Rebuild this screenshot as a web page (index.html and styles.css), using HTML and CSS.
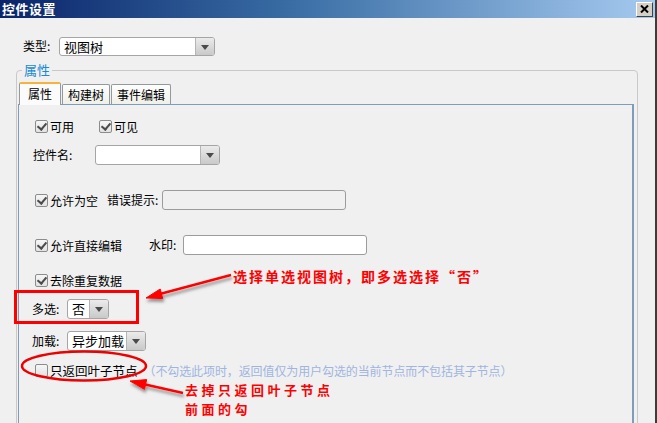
FILE: index.html
```html
<!DOCTYPE html>
<html lang="zh-CN">
<head>
	<meta charset="UTF-8">
	<meta name="viewport" content="width=device-width, initial-scale=1.0">
	<title>控件设置</title>
	<link rel="stylesheet" href="styles.css">
</head>
<body>
	<div class="window">
		<header class="titlebar">
			<span class="title">控件设置</span>
			<span class="close">
				<svg width="9" height="8" viewBox="0 0 9 8"><path d="M1 0.5 L8 7.5 M8 0.5 L1 7.5" stroke="#000" stroke-width="2"/></svg>
			</span>
		</header>

		<main class="content">
			<div class="type-row">
				<span class="label">类型:</span>
				<div class="select select-type"><span class="val">视图树</span><span class="arrow"></span></div>
			</div>

			<fieldset class="props">
				<legend>属性</legend>
				<div class="tabs">
					<span class="tab active">属性</span>
					<span class="tab">构建树</span>
					<span class="tab">事件编辑</span>
				</div>
				<div class="panel">
					<div class="row row-checks">
						<label class="check"><span class="box on"></span>可用</label>
						<label class="check check-visible"><span class="box on"></span>可见</label>
					</div>
					<div class="row row-name">
						<span class="label label-name">控件名:</span>
						<div class="select select-name"><span class="val"></span><span class="arrow"></span></div>
					</div>
					<div class="row row-empty">
						<label class="check"><span class="box on"></span>允许为空</label>
						<span class="label label-error">错误提示:</span>
						<span class="input disabled"></span>
					</div>
					<div class="row row-edit">
						<label class="check"><span class="box on"></span>允许直接编辑</label>
						<span class="label label-mark">水印:</span>
						<span class="input"></span>
					</div>
					<div class="row row-dedup">
						<label class="check"><span class="box on"></span>去除重复数据</label>
					</div>
					<div class="row row-multi">
						<span class="label label-short">多选:</span>
						<div class="select select-multi"><span class="val">否</span><span class="arrow"></span></div>
					</div>
					<div class="row row-load">
						<span class="label label-short">加载:</span>
						<div class="select select-load"><span class="val">异步加载</span><span class="arrow"></span></div>
					</div>
					<div class="row row-leaf">
						<label class="check"><span class="box"></span>只返回叶子节点</label>
						<span class="hint">（不勾选此项时，返回值仅为用户勾选的当前节点而不包括其子节点）</span>
					</div>
				</div>
			</fieldset>
		</main>

		<!-- marcas de anotação por cima do formulário -->
		<svg class="marks" width="657" height="423" viewBox="0 0 657 423">
			<defs>
				<filter id="sombra" x="-20%" y="-50%" width="140%" height="200%">
					<feDropShadow dx="1" dy="3" stdDeviation="1.5" flood-color="#555" flood-opacity="0.6"/>
				</filter>
			</defs>
			<rect x="15.5" y="291.5" width="122" height="31" fill="none" stroke="#f00" stroke-width="3"/>
			<ellipse cx="84" cy="366" rx="62" ry="14.5" fill="none" stroke="#e00" stroke-width="2.5"/>
			<g filter="url(#sombra)" fill="#f00" stroke="#f00">
				<line x1="231" y1="275" x2="158" y2="294.5" stroke-width="2.5"/>
				<polygon points="146,298 162.8,298.6 160.2,289" stroke-width="1"/>
				<line x1="183" y1="393" x2="143" y2="384" stroke-width="2.5"/>
				<polygon points="130,381 144.5,389.4 146.7,379.6" stroke-width="1"/>
			</g>
		</svg>
		<div class="note note-multi">选择单选视图树，即多选选择“否”</div>
		<div class="note note-leaf">去掉只返回叶子节点</div>
		<div class="note note-leaf2">前面的勾</div>
	</div>
</body>
</html>
```

FILE: styles.css
```css
* {
	margin: 0;
	padding: 0;
	box-sizing: border-box;
}
body {
	font-family: "Noto Sans CJK SC", "DejaVu Sans", sans-serif;
	font-size: 12px;
	color: #000;
	background-color: #f0f0f0;
}
.window {
	position: relative;
	width: 657px;
	height: 423px;
	overflow: hidden;
	background-color: #f0f0f0;
	border-right: 2px solid #3c3c3c;
}
.titlebar {
	display: flex;
	align-items: center;
	justify-content: space-between;
	height: 18px;
	padding: 0 2px 1px 2px;
	background: linear-gradient(to right, #0a246a 0%, #3a6ea5 45%, #a6caf0 100%);
}
.title {
	color: #fff;
	font-weight: bold;
	font-size: 13px;
	line-height: 16px;
	letter-spacing: 0.5px;
}
.close {
	display: flex;
	align-items: center;
	justify-content: center;
	width: 17px;
	height: 15px;
	margin-top: 1px;
	background-color: #d4d0c8;
	border: 1px solid;
	border-color: #fff #404040 #404040 #fff;
}
.label {
	line-height: 20px;
	white-space: nowrap;
}
.type-row {
	display: flex;
	align-items: center;
	margin-top: 18px;
	padding-left: 23px;
}
.type-row .label {
	width: 36px;
}
.select {
	display: flex;
	height: 20px;
	background-color: #fff;
	border: 1px solid #a5a5a5;
	border-radius: 3px;
	overflow: hidden;
}
.select .val {
	flex: 1;
	line-height: 18px;
	padding-left: 4px;
	font-size: 13px;
}
.select .arrow {
	position: relative;
	width: 19px;
	border-left: 1px solid #b5b5b5;
	background: linear-gradient(#ebebeb, #c9c9c9);
}
.select .arrow::after {
	content: "";
	position: absolute;
	left: 5px;
	top: 7px;
	border-left: 4px solid transparent;
	border-right: 4px solid transparent;
	border-top: 5px solid #4a4a4a;
}
.select-type {
	width: 156px;
	height: 19px;
}
.props {
	width: 622px;
	height: 400px;
	margin: 7px 0 0 16px;
	padding: 5px 3px 0 1px;
	border: 1px solid #c9c9c9;
	border-radius: 4px;
}
.props legend {
	margin-left: 4px;
	padding: 0 2px;
	color: #1a8ad4;
	font-size: 13px;
	line-height: 14px;
}
.tabs {
	display: flex;
	align-items: flex-end;
	padding-left: 1px;
	height: 22px;
}
.tab {
	height: 20px;
	line-height: 19px;
	padding: 0 5px;
	margin-left: 1px;
	border: 1px solid #919b9c;
	border-bottom: none;
	border-radius: 2px 2px 0 0;
	background: linear-gradient(#fdfdfd, #f0f0ea);
	font-size: 12px;
}
.tab.active {
	margin-left: 0;
	padding: 0 8px;
	border-top: 2px solid #f5b53a;
	background: #fbfbfb;
	position: relative;
	z-index: 1;
	margin-bottom: -1px;
	height: 23px;
}
.panel {
	height: 330px;
	padding: 11px 0 0 14px;
	border: 1px solid #7f9db9;
	border-right-width: 2px;
	background-color: #f0f0f0;
}
.row {
	display: flex;
	align-items: center;
	height: 20px;
}
.check {
	display: flex;
	align-items: center;
	gap: 2px;
	margin-left: 2px;
	white-space: nowrap;
	font-size: 12px;
}
.box {
	position: relative;
	width: 13px;
	height: 13px;
	border: 1px solid #8c8c8c;
	border-radius: 2px;
	background: linear-gradient(#f6f6f6, #e2e2e2);
}
.box.on::after {
	content: "";
	position: absolute;
	left: 3px;
	top: 0px;
	width: 4px;
	height: 7px;
	border-right: 2.5px solid #4b4b4b;
	border-bottom: 2.5px solid #4b4b4b;
	transform: rotate(40deg);
}
.check-visible {
	margin-left: 25px;
}
.row-name {
	margin-top: 9px;
}
.label-name {
	width: 62px;
}
.select-name {
	width: 125px;
	height: 20px;
}
.input {
	display: block;
	height: 20px;
	background-color: #fff;
	border: 1px solid #9c9c9c;
	border-radius: 3px;
}
.input.disabled {
	background-color: #f0f0f0;
}
.row-empty {
	margin-top: 25px;
}
.label-error {
	margin-left: 9px;
}
.row-empty .input {
	width: 184px;
	margin-left: 4px;
}
.row-edit {
	margin-top: 25px;
}
.label-mark {
	margin-left: 27px;
}
.row-edit .input {
	width: 184px;
	margin-left: 7px;
}
.row-dedup {
	margin-top: 15px;
}
.row-multi {
	margin-top: 9px;
}
.label-short {
	width: 35px;
	margin-left: -1px;
}
.select-multi {
	width: 42px;
}
.select-load {
	width: 79px;
}
.row-load {
	margin-top: 12px;
}
.row-leaf {
	margin-top: 9px;
}
.row-leaf .check {
	font-size: 12.5px;
}
.hint {
	margin-left: 6px;
	color: #9fb5e0;
	font-size: 12px;
	letter-spacing: -0.1px;
	white-space: nowrap;
}
.marks {
	position: absolute;
	left: 0;
	top: 0;
	pointer-events: none;
}
.note {
	position: absolute;
	color: #f00;
	font-weight: bold;
	font-size: 13px;
	letter-spacing: 3.5px;
	line-height: 19px;
	white-space: nowrap;
}
.note-multi {
	left: 233px;
	top: 266px;
	font-size: 14px;
	letter-spacing: 2px;
	line-height: 20px;
}
.note-leaf {
	left: 185px;
	top: 380px;
}
.note-leaf2 {
	left: 185px;
	top: 399px;
}
```
